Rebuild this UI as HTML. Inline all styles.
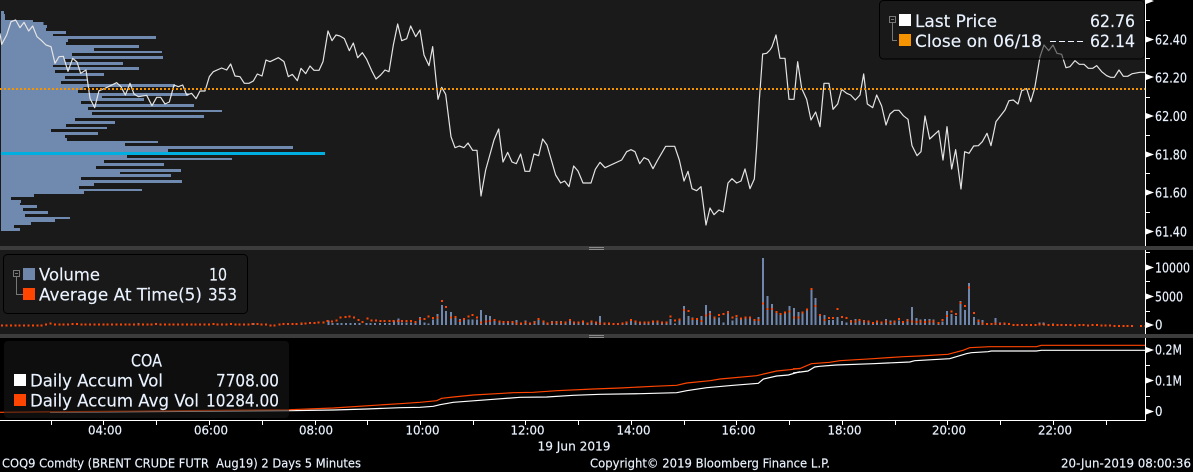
<!DOCTYPE html>
<html><head><meta charset="utf-8"><title>COQ9 Comdty</title>
<style>
html,body{margin:0;padding:0;background:#000;width:1193px;height:472px;overflow:hidden}
svg{display:block}
text{font-family:"DejaVu Sans","Liberation Sans",sans-serif;fill:#eaf3ff;stroke:#eaf3ff;stroke-width:.15}
.l{font-size:17px}
.a{font-size:13px}
.t{font-size:12px}
</style></head><body>
<svg width="1193" height="472" viewBox="0 0 1193 472" xmlns="http://www.w3.org/2000/svg">
<rect width="1193" height="472" fill="#000"/>
<rect x="0" y="0" width="1145" height="246" fill="#1a1a1a"/>
<rect x="0" y="250" width="1145" height="84" fill="#1a1a1a"/>
<rect x="0" y="246" width="1193" height="4" fill="#3c3c3c"/>
<rect x="0" y="334" width="1193" height="4" fill="#3c3c3c"/>
<path d="M589 247.5h15M589 249.5h15M589 335.5h15M589 337.5h15" stroke="#8a8a8a" stroke-width="1" fill="none"/>

<!-- Volume profile -->
<g transform="scale(.33333)">
<path fill="#7089ae" shape-rendering="crispEdges" d="M3 33H12V42H15V60H99V66H130V75H141V84H138V93H198V102H159V108H468V117H204V126H198V135H417V144H282V153H486V159H216V168H489V177H195V186H369V195H159V201H417V210H165V219H312V228H195V237H262V243H183V252H525V261H250V270H234V279H565V288H306V294H432V303H243V312H582V321H264V330H666V336H276V345H612V354H225V363H345V372H198V381H321V387H153V396H294V405H195V414H201V423H474V429H375V438H879V447H504V456H975V465H381V474H696V480H312V489H492V498H288V507H543V516H360V522H513V531H243V540H546V549H282V558H237V567H426V573H252V582H102V591H33V600H63V609H60V615H111V624H69V633H144V642H75V651H210V657H165V666H93V675H42V684H60V693H3Z"/>
<rect x="3" y="456" width="972" height="9" fill="#00aee0"/>
<!-- price left -->
<polyline fill="none" stroke="#e4e4e4" stroke-width="3.6" stroke-linejoin="round" points="0,100 5,133 20,105 33,65 47,60 60,83 72,67 86,93 98,78 111,110 125,122 138,135 153,140 165,190 177,170 190,169 204,214 218,175 231,186 242,220 258,210 265,260 270,295 284,323 297,272 315,265 350,248 363,260 376,285 390,250 402,282 415,290 440,286 456,317 470,292 482,292 495,312 508,306 522,255 535,260 548,255 560,285 575,280 588,296 600,273 615,273 628,230 640,215 665,204 680,210 692,192 705,228 720,230 733,250 747,250 760,243 772,222 786,228 798,180 810,185 835,173 852,185 865,230 877,223 892,242 903,205 917,221 930,198 942,211 957,211 969,185 984,93 996,122 1008,105 1020,108"/>
</g>
<g transform="translate(340,0) scale(.33333)">
<polyline fill="none" stroke="#e4e4e4" stroke-width="3.6" stroke-linejoin="round" points="0,108 13,116 28,152 40,129 53,173 67,158 80,178 95,212 108,237 122,225 135,210 147,215 160,135 173,72 185,122 200,116 212,78 227,110 240,90 252,165 267,197 278,140 294,298 305,262 317,283 333,410 345,443 358,438 372,443 384,429 398,451 411,451 423,588 437,510 462,420 476,387 489,486 503,457 516,486 529,491 542,462 555,514 569,514 582,462 596,467 608,417 621,435 647,525 662,549 674,543 687,560 701,498 714,513 729,549 753,549 766,508 780,487 795,503 845,480 860,455 873,449 885,455 899,491 912,473 925,479 939,506 953,480 977,439 1004,439 1018,480 1032,543 1044,514 1056,566 1070,572 1083,560 1098,675 1110,624 1122,644 1137,630 1150,636 1164,549 1176,536 1190,549 1203,543 1215,507 1230,566 1243,537 1250,440 1258,300 1268,162 1280,160 1290,150"/>
</g>
<g transform="translate(760,0) scale(.33333)">
<polyline fill="none" stroke="#e4e4e4" stroke-width="3.6" stroke-linejoin="round" points="30,150 36,140 48,105 60,175 75,175 87,298 102,298 113,185 125,265 140,298 153,360 167,336 180,380 192,250 207,250 219,328 233,312 245,268 260,280 272,285 286,300 300,285 311,222 322,312 338,323 350,285 365,318 378,375 390,342 403,331 417,331 430,347 444,358 456,437 471,467 483,455 495,348 509,417 536,392 549,480 561,380 575,507 587,449 603,567 614,455 627,460 641,438 655,437 667,425 681,400 693,437 708,365 722,347 735,330 747,302 760,300 774,312 785,272 800,266 812,305 824,265 840,170 852,135 866,152 879,135 891,160 905,163 918,203 930,200 945,182 958,193 972,193 985,205 998,205 1010,197 1025,215 1040,227 1052,232 1063,232 1077,210 1090,229 1103,229 1117,221 1140,217 1155,217"/>
</g>
<line x1="0" y1="89" x2="1145" y2="89" stroke="#f59300" stroke-width="2" stroke-dasharray="2 2" shape-rendering="crispEdges"/>

<!-- Volume bars: left -->
<g transform="translate(0,245) scale(.33333)" fill="none" shape-rendering="crispEdges">
<path stroke="#6f87ad" stroke-width="6" d="M415 240V234M640 240V234M760 240V234M905 240V236M985 240V227M998 240V234M1012 240V234M1025 240V234M1038 240V234M1051 240V234M1065 240V234M1078 240V234M1100 240V234M1112 240V234M1125 240V234M1140 240V234M1155 240V234M1168 240V234M1182 240V226M1195 240V220"/>
<path stroke="#ff4500" stroke-width="6" d="M6 238v6M19 238v6M33 238v6M46 238v6M59 238v6M72 238v6M85 238v6M99 238v6M112 238v6M125 238v6M138 236v6M152 232v6M165 236v6M178 236v6M191 236v6M204 235v6M217 234v6M231 234v6M244 236v6M257 236v6M270 236v6M283 236v6M297 236v6M310 236v6M323 236v6M336 236v6M349 236v6M363 236v6M376 236v6M389 236v6M402 236v6M415 236v6M429 236v6M442 236v6M455 236v6M468 234v6M481 236v6M495 236v6M508 236v6M521 236v6M534 236v6M547 236v6M561 236v6M574 236v6M587 236v6M600 236v6M613 236v6M627 236v6M640 234v6M653 236v6M666 236v6M679 236v6M693 234v6M706 236v6M719 236v6M732 236v6M745 236v6M758 234v6M772 234v6M785 236v6M798 236v6M811 238v6M824 238v6M838 236v6M851 234v6M864 234v6M877 234v6M890 234v6M904 232v6M917 232v6M930 231v6M943 231v6M956 230v6M970 229v6M983 225v6M996 227v6M1009 223v6M1022 215v6M1036 213v6M1049 211v6M1062 214v6M1075 222v6M1088 228v6M1102 218v6M1115 223v6M1128 224v6M1141 225v6M1154 225v6M1168 225v6M1181 225v6M1194 225v6"/>
</g>
<!-- Volume bars: middle -->
<g transform="translate(400,245) scale(.33333)" fill="none" shape-rendering="crispEdges">
<path stroke="#6f87ad" stroke-width="6" d="M6 240V233M19 240V233M33 240V233M46 240V233M60 240V216M73 240V232M86 240V235M99 240V224M113 240V207M126 240V180M138 240V198M153 240V201M166 240V215M180 240V222M192 240V219M205 240V224M218 240V224M231 240V224M243 240V195M258 240V210M270 240V213M284 240V224M298 240V228M310 240V232M324 240V232M337 240V232M350 240V225M363 240V232M376 240V226M390 240V232M403 240V228M416 240V224M430 240V228M443 240V232M456 240V228M470 240V228M483 240V228M496 240V232M510 240V226M522 240V230M536 240V230M549 240V228M562 240V232M575 240V228M588 240V232M600 240V213M614 240V232M627 240V232M640 240V234M654 240V234M667 240V232M680 240V232M693 240V224M706 240V226M720 240V230M733 240V230M746 240V230M759 240V226M772 240V226M786 240V230M799 240V230M812 240V222M825 240V235M838 240V224M852 240V183M865 240V213M878 240V218M891 240V222M904 240V213M918 240V180M930 240V198M943 240V214M957 240V218M970 240V232M984 240V198M997 240V226M1010 240V218M1023 240V222M1036 240V218M1050 240V218M1063 240V222M1076 240V216M1089 240V39M1102 240V153M1116 240V177M1129 240V198M1142 240V207M1155 240V205M1168 240V183M1182 240V189M1195 240V201"/>
<path stroke="#ff4500" stroke-width="6" d="M6 225v6M19 225v6M33 225v6M46 228v6M60 219v6M73 219v6M86 212v6M99 216v6M113 215v6M126 165v6M138 183v6M153 215v6M166 213v6M180 225v6M192 219v6M205 212v6M218 207v6M231 215v6M243 229v6M258 226v6M270 225v6M284 222v6M298 226v6M310 228v6M324 228v6M337 228v6M350 233v6M363 233v6M376 229v6M390 232v6M403 229v6M416 219v6M430 226v6M443 232v6M456 229v6M470 229v6M483 229v6M496 229v6M510 222v6M522 229v6M536 229v6M549 226v6M562 232v6M575 226v6M588 229v6M600 232v6M614 232v6M627 232v6M640 234v6M654 234v6M667 232v6M680 229v6M693 222v6M706 226v6M720 229v6M733 229v6M746 229v6M759 226v6M772 226v6M786 229v6M799 229v6M812 212v6M825 223v6M838 221v6M852 192v6M865 195v6M878 219v6M891 219v6M904 225v6M918 209v6M930 204v6M943 215v6M957 207v6M970 204v6M984 200v6M997 215v6M1010 210v6M1023 217v6M1036 215v6M1050 215v6M1063 222v6M1076 222v6M1089 173v6M1102 189v6M1116 189v6M1129 198v6M1142 204v6M1155 200v6M1168 197v6M1182 215v6M1195 212v6"/>
</g>
<!-- Volume bars: right -->
<g transform="translate(793,245) scale(.33333)" fill="none" shape-rendering="crispEdges">
<path stroke="#6f87ad" stroke-width="6" d="M3 240V189M16 240V201M29 240V203M42 240V195M55 240V130M68 240V159M81 240V207M94 240V210M108 240V225M120 240V225M134 240V216M147 240V228M160 240V232M174 240V225M187 240V222M200 240V227M213 240V225M227 240V226M240 240V232M252 240V228M266 240V230M279 240V222M292 240V226M305 240V232M318 240V226M330 240V232M344 240V222M357 240V186M370 240V219M383 240V224M396 240V222M410 240V222M422 240V224M436 240V232M449 240V230M462 240V198M476 240V207M489 240V213M503 240V168M516 240V195M528 240V114M543 240V216M556 240V224M569 240V225M582 240V235M595 240V235M608 240V219M621 240V232M634 240V232M648 240V236M740 240V232M752 240V232M780 240V235"/>
<path stroke="#ff4500" stroke-width="6" d="M3 215v6M16 215v6M29 200v6M42 190v6M55 129v6M68 180v6M81 207v6M94 222v6M108 216v6M120 216v6M134 189v6M147 213v6M160 216v6M174 226v6M187 226v6M200 222v6M213 226v6M227 226v6M240 231v6M252 226v6M266 229v6M279 226v6M292 231v6M305 226v6M318 219v6M330 228v6M344 223v6M357 226v6M370 228v6M383 226v6M396 228v6M410 226v6M422 226v6M436 231v6M449 222v6M462 210v6M476 196v6M489 204v6M503 171v6M516 180v6M528 125v6M543 201v6M556 225v6M569 232v6M582 234v6M595 234v6M608 232v6M621 234v6M634 232v6M648 234v6M661 237v6M674 237v6M687 237v6M701 237v6M714 237v6M727 237v6M740 235v6M753 235v6M767 237v6M780 237v6M793 237v6M806 237v6M819 237v6M833 237v6M846 239v6M859 237v6M872 237v6M885 239v6M899 237v6M912 237v6M925 239v6M938 239v6M951 239v6M965 240v6M978 240v6M991 240v6M1004 240v6M1017 240v6M1044 240v6M1057 240v6"/>
</g>

<!-- Accumulation lines -->
<g transform="translate(0,245) scale(.33333)" fill="none" stroke-width="3.6">
<polyline stroke="#fff" points="150,502 870,497 1000,495 1100,492 1200,488"/>
<polyline stroke="#ff4500" points="0,502 870,494 1000,489 1200,476"/>
</g>
<g transform="translate(400,245) scale(.33333)" fill="none" stroke-width="3.6">
<polyline stroke="#fff" points="0,488 60,487 100,484 120,479 160,472 200,469 280,463 360,457 440,456 520,451 600,448 720,446 830,443 860,437 920,428 1000,421 1075,415 1090,402 1130,393 1165,390 1200,380"/>
<polyline stroke="#ff4500" points="0,476 60,472 110,467 125,460 160,456 220,450 290,446 340,443 400,442 470,437 580,432 660,429 760,424 830,421 860,414 930,407 960,402 1070,392 1130,378 1170,374 1200,370"/>
</g>
<g transform="translate(793,245) scale(.33333)" fill="none" stroke-width="3.6">
<polyline stroke="#fff" points="0,384 45,378 65,366 80,364 130,360 240,356 350,351 365,347 470,341 520,326 535,323 585,320 595,318 730,318 745,316 1057,316"/>
<polyline stroke="#ff4500" points="0,371 20,371 55,356 110,352 140,347 240,341 330,335 380,333 465,328 510,316 530,308 590,305 730,305 745,301 1057,301"/>
</g>

<!-- Axes -->
<path d="M1145.5 0V246M1145.5 250V334M1145.5 338V420.5M0 420.5H1146" stroke="#fff" stroke-width="1" fill="none" shape-rendering="crispEdges"/>
<path d="M51.5 421v4M103.5 421v4M156.5 421v4M209.5 421v4M262.5 421v4M315.5 421v4M367.5 421v4M420.5 421v4M473.5 421v4M525.5 421v4M578.5 421v4M631.5 421v4M684.5 421v4M736.5 421v4M789.5 421v4M842.5 421v4M895.5 421v4M947.5 421v4M1000.5 421v4M1053.5 421v4M1106.5 421v4" stroke="#fff" stroke-width="1" fill="none" shape-rendering="crispEdges"/>
<path d="M1146 20.5h4M1146 58.5h4M1146 97.5h4M1146 135.5h4M1146 173.5h4M1146 212.5h4M1146 252.5h4M1146 281.5h4M1146 311.5h4M1146 365.5h4M1146 396.5h4" stroke="#fff" stroke-width="1" fill="none" shape-rendering="crispEdges"/>
<path fill="#fff" d="M1146 -2l8 3-8 3zM1146 36.5l8 3-8 3zM1146 74l8 3-8 3zM1146 113l8 3-8 3zM1146 151.5l8 3-8 3zM1146 189.5l8 3-8 3zM1146 228.5l8 3-8 3zM1146 264.5l8 3-8 3zM1146 293.5l8 3-8 3zM1146 322l8 3-8 3zM1146 347l8 3-8 3zM1146 377.5l8 3-8 3zM1146 408.5l8 3-8 3z"/>

<text class="a" x="1155" y="44.5" textLength="32" lengthAdjust="spacingAndGlyphs">62.40</text>
<text class="a" x="1155" y="82.7" textLength="32" lengthAdjust="spacingAndGlyphs">62.20</text>
<text class="a" x="1155" y="121" textLength="32" lengthAdjust="spacingAndGlyphs">62.00</text>
<text class="a" x="1155" y="159.5" textLength="32" lengthAdjust="spacingAndGlyphs">61.80</text>
<text class="a" x="1155" y="197.5" textLength="32" lengthAdjust="spacingAndGlyphs">61.60</text>
<text class="a" x="1155" y="236.5" textLength="32" lengthAdjust="spacingAndGlyphs">61.40</text>
<text class="a" x="1155" y="272.3" textLength="35" lengthAdjust="spacingAndGlyphs">10000</text>
<text class="a" x="1155" y="301.5" textLength="28" lengthAdjust="spacingAndGlyphs">5000</text>
<text class="a" x="1155" y="329.5" textLength="7.5" lengthAdjust="spacingAndGlyphs">0</text>
<text class="a" x="1155" y="354.5" textLength="27" lengthAdjust="spacingAndGlyphs">0.2M</text>
<text class="a" x="1155" y="385.5" textLength="27" lengthAdjust="spacingAndGlyphs">0.1M</text>
<text class="a" x="1155" y="416" textLength="7.5" lengthAdjust="spacingAndGlyphs">0</text>

<text class="t" x="88" y="434.5" textLength="34" lengthAdjust="spacingAndGlyphs">04:00</text>
<text class="t" x="194" y="434.5" textLength="34" lengthAdjust="spacingAndGlyphs">06:00</text>
<text class="t" x="299" y="434.5" textLength="34" lengthAdjust="spacingAndGlyphs">08:00</text>
<text class="t" x="405.5" y="434.5" textLength="34" lengthAdjust="spacingAndGlyphs">10:00</text>
<text class="t" x="510.5" y="434.5" textLength="34" lengthAdjust="spacingAndGlyphs">12:00</text>
<text class="t" x="616.5" y="434.5" textLength="34" lengthAdjust="spacingAndGlyphs">14:00</text>
<text class="t" x="721.5" y="434.5" textLength="34" lengthAdjust="spacingAndGlyphs">16:00</text>
<text class="t" x="827.5" y="434.5" textLength="34" lengthAdjust="spacingAndGlyphs">18:00</text>
<text class="t" x="932" y="434.5" textLength="34" lengthAdjust="spacingAndGlyphs">20:00</text>
<text class="t" x="1038" y="434.5" textLength="34" lengthAdjust="spacingAndGlyphs">22:00</text>
<text class="t" x="537.5" y="450.5" textLength="73" lengthAdjust="spacingAndGlyphs">19 Jun 2019</text>
<text class="t" x="2" y="467.5" textLength="359" lengthAdjust="spacingAndGlyphs" xml:space="preserve">COQ9 Comdty (BRENT CRUDE FUTR  Aug19) 2 Days 5 Minutes</text>
<text class="t" x="590" y="467.5" textLength="240" lengthAdjust="spacingAndGlyphs">Copyright© 2019 Bloomberg Finance L.P.</text>
<text class="t" x="1061" y="467.5" textLength="130" lengthAdjust="spacingAndGlyphs">20-Jun-2019 08:00:36</text>

<!-- Legend: price -->
<rect x="879.5" y="0.5" width="265" height="58.5" rx="4" fill="#1a1a1a" fill-opacity=".55" stroke="#000"/>
<rect x="889.5" y="16.5" width="6" height="6" fill="none" stroke="#777"/>
<path d="M891 19.5h3M892.5 23V40.5H897" stroke="#777" fill="none"/>
<rect x="899" y="14" width="12" height="12" fill="#fff"/>
<rect x="899" y="34" width="12" height="12" fill="#f59300"/>
<text class="l" x="915" y="27" textLength="82" lengthAdjust="spacingAndGlyphs">Last Price</text>
<text class="l" x="1090" y="27" textLength="45" lengthAdjust="spacingAndGlyphs">62.76</text>
<text class="l" x="915" y="47" textLength="127" lengthAdjust="spacingAndGlyphs">Close on 06/18</text>
<path d="M1050 41.5h6M1059 41.5h6M1068 41.5h6M1077 41.5h6" stroke="#eaf3ff" stroke-width="1"/>
<text class="l" x="1090" y="47" textLength="45" lengthAdjust="spacingAndGlyphs">62.14</text>

<!-- Legend: volume -->
<rect x="3.5" y="254.5" width="244" height="59" rx="4" fill="#1a1a1a" fill-opacity=".55" stroke="#000"/>
<rect x="13.5" y="270.5" width="6" height="6" fill="none" stroke="#777"/>
<path d="M15 273.5h3M16.5 277V294.5H23" stroke="#777" fill="none"/>
<rect x="23" y="268" width="12" height="12" fill="#6f86ab"/>
<rect x="23" y="288" width="12" height="12" fill="#ff4500"/>
<text class="l" x="39" y="280.5" textLength="61" lengthAdjust="spacingAndGlyphs">Volume</text>
<text class="l" x="209" y="280.5" textLength="18" lengthAdjust="spacingAndGlyphs">10</text>
<text class="l" x="39" y="300.5" textLength="163" lengthAdjust="spacingAndGlyphs">Average At Time(5)</text>
<text class="l" x="208" y="300.5" textLength="29" lengthAdjust="spacingAndGlyphs">353</text>

<!-- Legend: COA -->
<rect x="4" y="341" width="285" height="77" rx="4" fill="#1a1a1a" fill-opacity=".55"/>
<text class="l" x="131" y="366.5" textLength="31" lengthAdjust="spacingAndGlyphs">COA</text>
<rect x="14" y="374" width="12" height="12" fill="#fff"/>
<rect x="14" y="394" width="12" height="12" fill="#ff4500"/>
<text class="l" x="30" y="386.5" textLength="133" lengthAdjust="spacingAndGlyphs">Daily Accum Vol</text>
<text class="l" x="216" y="386.5" textLength="63" lengthAdjust="spacingAndGlyphs">7708.00</text>
<text class="l" x="30" y="406.5" textLength="169" lengthAdjust="spacingAndGlyphs">Daily Accum Avg Vol</text>
<text class="l" x="206" y="406.5" textLength="73" lengthAdjust="spacingAndGlyphs">10284.00</text>
</svg>
</body></html>
